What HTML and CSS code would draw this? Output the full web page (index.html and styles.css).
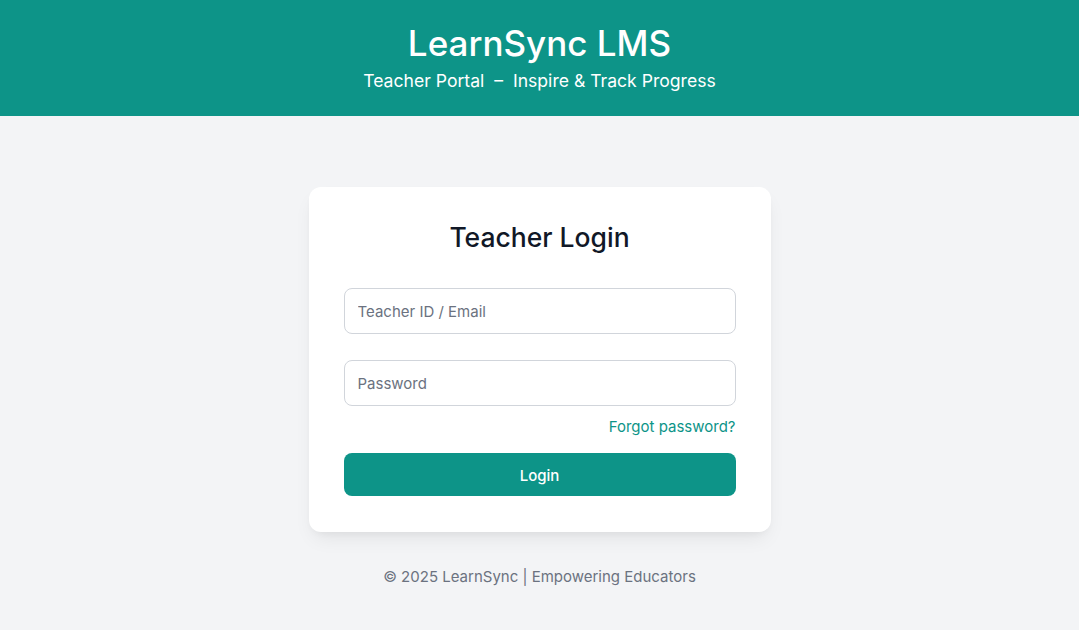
FILE: index.html
```html
<!DOCTYPE html>
<html lang="en">
<head>
<meta charset="utf-8">
<title>LearnSync LMS – Teacher Login</title>
<link rel="stylesheet" href="styles.css">
</head>
<body>
<header class="site-header">
  <h1 class="brand">LearnSync LMS</h1>
  <p class="tagline">Teacher Portal &nbsp;–&nbsp; Inspire &amp; Track Progress</p>
</header>
<main class="main">
  <form class="card">
    <h2 class="card-title">Teacher Login</h2>
    <input class="field" type="text" placeholder="Teacher ID / Email">
    <input class="field field-pw" type="password" placeholder="Password">
    <div class="forgot-row"><a class="forgot" href="#">Forgot password?</a></div>
    <button class="btn" type="button">Login</button>
  </form>
  <footer class="footer">© 2025 LearnSync | Empowering Educators</footer>
</main>
</body>
</html>
```
FILE: styles.css
```css
* { box-sizing: border-box; }
html, body { margin: 0; padding: 0; }
body {
  font-family: Inter, "Noto Sans", sans-serif;
  background: #f3f4f6;
  color: #111827;
  min-height: 630px;
}
.site-header {
  background: #0d9488;
  color: #fff;
  text-align: center;
  height: 116px;
  padding-top: 21px;
}
.brand {
  margin: 0;
  font-size: 35px;
  font-weight: 500;
  line-height: 44px;
}
.tagline {
  margin: 4px 0 0;
  font-size: 17.6px;
  line-height: 24px;
}
.main {
  display: flex;
  flex-direction: column;
  align-items: center;
  padding-top: 71px;
}
.card {
  width: 462px;
  background: #fff;
  border-radius: 12px;
  box-shadow: 0 10px 20px -5px rgba(0,0,0,0.08), 0 4px 8px -4px rgba(0,0,0,0.06);
  padding: 32px 35px 36px;
  display: flex;
  flex-direction: column;
}
.card-title {
  margin: 0 0 33px;
  text-align: center;
  font-size: 26.5px;
  font-weight: 500;
  line-height: 36px;
  color: #111827;
}
.field {
  height: 46px;
  border: 1px solid #d1d5db;
  border-radius: 8px;
  padding: 0 13px;
  font-family: inherit;
  font-size: 15px;
  color: #111827;
  background: #fff;
  outline: none;
}
.field::placeholder { color: #6b7280; }
.field-pw { margin-top: 26px; }
.forgot-row {
  text-align: right;
  margin-top: 9px;
  line-height: 22px;
}
.forgot {
  color: #0d9488;
  font-size: 15px;
  text-decoration: none;
}
.btn {
  margin-top: 15px;
  height: 43px;
  border: 0;
  border-radius: 8px;
  background: #0d9488;
  color: #fff;
  font-family: inherit;
  font-size: 15px;
  font-weight: 500;
  padding-top: 2px;
}
.footer {
  margin-top: 34px;
  font-size: 15px;
  line-height: 22px;
  color: #6b7280;
}
```
